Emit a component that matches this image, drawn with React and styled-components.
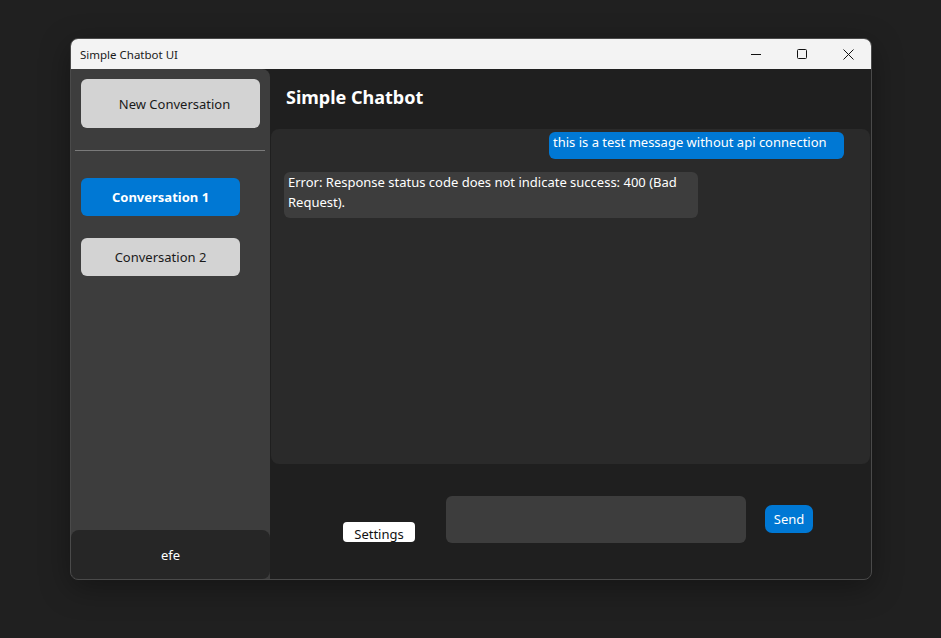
import React from "react";
import styled, { createGlobalStyle } from "styled-components";

const GlobalStyle = createGlobalStyle`
  html, body {
    margin: 0;
    padding: 0;
    background: #202020;
    font-family: "Noto Sans", "Open Sans", "DejaVu Sans", sans-serif;
  }
`;

const Desktop = styled.div`
  width: 941px;
  height: 638px;
  padding: 38px 0 0 70px;
  box-sizing: border-box;
`;

const Window = styled.div`
  width: 802px;
  height: 542px;
  box-sizing: border-box;
  border: 1px solid #4a4a4a;
  border-radius: 8px;
  overflow: hidden;
  display: flex;
  flex-direction: column;
  background: #1f1f1f;
  box-shadow: 0 8px 30px rgba(0, 0, 0, 0.35);
`;

const TitleBar = styled.div`
  height: 30px;
  flex: none;
  background: #f3f3f3;
  display: flex;
  align-items: center;
  padding-left: 9px;
`;

const TitleText = styled.span`
  flex: 1;
  font-size: 11.5px;
  color: #1a1a1a;
`;

const WinButton = styled.div`
  width: 46px;
  height: 30px;
  display: flex;
  align-items: center;
  justify-content: center;
`;

const Body = styled.div`
  flex: 1;
  display: flex;
  min-height: 0;
`;

const Sidebar = styled.div`
  width: 199px;
  flex: none;
  background: #3d3d3d;
  border-top-right-radius: 8px;
  display: flex;
  flex-direction: column;
`;

const SideButton = styled.div`
  box-sizing: border-box;
  width: ${(p) => p.$w}px;
  height: ${(p) => p.$h}px;
  margin: ${(p) => p.$mt}px 0 0 10px;
  padding-left: ${(p) => p.$pl || 0}px;
  border-radius: 6px;
  background: ${(p) => (p.$active ? "#0078d4" : "#d3d3d3")};
  color: ${(p) => (p.$active ? "#ffffff" : "#1a1a1a")};
  font-weight: ${(p) => (p.$active ? 700 : 400)};
  font-size: 13px;
  display: flex;
  align-items: center;
  justify-content: center;
`;

const Separator = styled.div`
  height: 1px;
  margin: 22px 5px 0 4px;
  background: #7a7a7a;
`;

const UserPanel = styled.div`
  margin-top: auto;
  height: 49px;
  background: #262626;
  border-radius: 8px;
  display: flex;
  align-items: center;
  justify-content: center;
  color: #ffffff;
  font-size: 13px;
`;

const Main = styled.div`
  flex: 1;
  display: flex;
  flex-direction: column;
  padding-left: 1px;
`;

const Header = styled.div`
  height: 60px;
  flex: none;
  box-sizing: border-box;
  padding: 0 0 5px 15px;
  display: flex;
  align-items: center;
  color: #ffffff;
  font-size: 18px;
  font-weight: 700;
`;

const ChatArea = styled.div`
  height: 335px;
  flex: none;
  margin-right: 1px;
  background: #2a2a2a;
  border-radius: 8px;
  display: flex;
  flex-direction: column;
  padding: 3px 0 0 13px;
  box-sizing: border-box;
`;

const Bubble = styled.div`
  box-sizing: border-box;
  align-self: ${(p) => (p.$user ? "flex-end" : "flex-start")};
  width: ${(p) => p.$w}px;
  margin: ${(p) => p.$margin};
  padding: ${(p) => (p.$user ? "0 10px 7px 4px" : "0 4px 6px 4px")};
  border-radius: 6px;
  background: ${(p) => (p.$user ? "#0078d4" : "#3d3d3d")};
  color: #ffffff;
  font-size: 13px;
  line-height: 20px;
`;

const InputBar = styled.div`
  flex: 1;
  display: flex;
  align-items: flex-start;
`;

const SettingsButton = styled.div`
  margin: 58px 0 0 72px;
  width: 72px;
  height: 20px;
  box-sizing: border-box;
  background: #ffffff;
  border-radius: 4px;
  color: #111111;
  font-size: 13px;
  line-height: 25px;
  text-align: center;
  overflow: hidden;
`;

const TextInput = styled.div`
  margin: 32px 0 0 31px;
  width: 300px;
  height: 47px;
  background: #3d3d3d;
  border-radius: 6px;
`;

const SendButton = styled.div`
  margin: 41px 0 0 19px;
  width: 48px;
  height: 28px;
  background: #0078d4;
  border-radius: 7px;
  color: #ffffff;
  font-size: 13px;
  display: flex;
  align-items: center;
  justify-content: center;
`;

export default function App() {
  return (
    <>
      <GlobalStyle />
      <Desktop>
        <Window>
          <TitleBar>
            <TitleText>Simple Chatbot UI</TitleText>
            <WinButton>
              <svg width="10" height="10" viewBox="0 0 10 10">
                <path d="M0 5.5h10" stroke="#111" strokeWidth="1" />
              </svg>
            </WinButton>
            <WinButton>
              <svg width="10" height="10" viewBox="0 0 10 10">
                <rect x="0.5" y="0.5" width="9" height="9" rx="1" fill="none" stroke="#111" strokeWidth="1" />
              </svg>
            </WinButton>
            <WinButton>
              <svg width="11" height="11" viewBox="0 0 11 11">
                <path d="M0.5 0.5l10 10M10.5 0.5l-10 10" stroke="#111" strokeWidth="1" />
              </svg>
            </WinButton>
          </TitleBar>
          <Body>
            <Sidebar>
              <SideButton $w={179} $h={49} $mt={10} $pl={8}>New Conversation</SideButton>
              <Separator />
              <SideButton $w={159} $h={38} $mt={27} $active>Conversation 1</SideButton>
              <SideButton $w={159} $h={38} $mt={22}>Conversation 2</SideButton>
              <UserPanel>efe</UserPanel>
            </Sidebar>
            <Main>
              <Header>Simple Chatbot</Header>
              <ChatArea>
                <Bubble $user $w={295} $margin="0 26px 0 0">
                  this is a test message without api connection
                </Bubble>
                <Bubble $w={414} $margin="13px 0 0 0">
                  Error: Response status code does not indicate success: 400 (Bad Request).
                </Bubble>
              </ChatArea>
              <InputBar>
                <SettingsButton>Settings</SettingsButton>
                <TextInput />
                <SendButton>Send</SendButton>
              </InputBar>
            </Main>
          </Body>
        </Window>
      </Desktop>
    </>
  );
}
